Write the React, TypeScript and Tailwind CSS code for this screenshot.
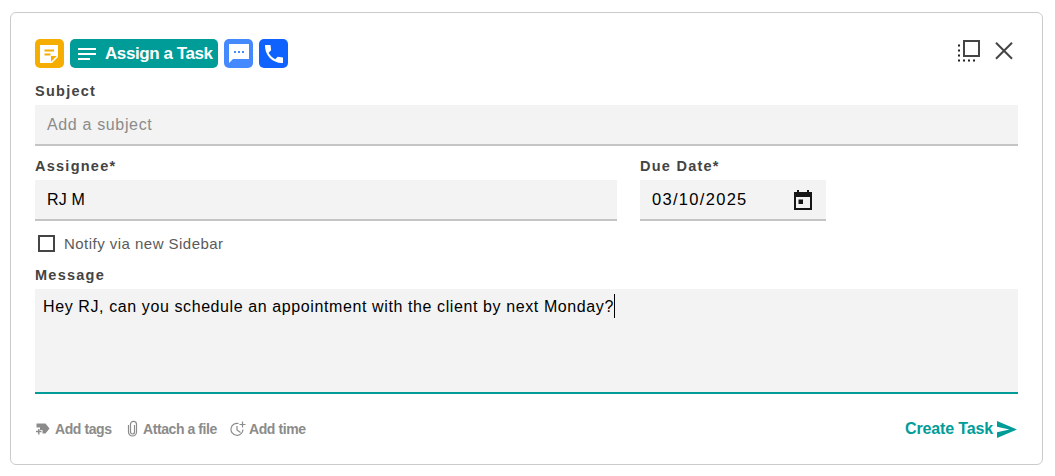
import { ReactNode } from "react";

type FieldProps = {
  label: string;
  className?: string;
  children: ReactNode;
};

const Field = ({ label, className, children }: FieldProps) => {
  return (
    <div className={className}>
      <div className="h-[26px] text-[14.5px] leading-[25px] font-bold tracking-[1.25px] text-[#444]">
        {label}
      </div>
      <div className="flex h-[41px] items-center border-b-2 border-[#c4c4c4] bg-[#f3f3f3] pl-3 text-[16px]">
        {children}
      </div>
    </div>
  );
};

const TaskForm = () => {
  return (
    <div className="mt-3 ml-[10px] h-[453px] w-[1033px] rounded-[6px] border border-[#cbcbcb] bg-white px-6 pt-[26px]">
      <div className="flex justify-between">
        <div className="flex gap-[6px]">
          <button className="flex h-[29px] w-[29px] items-center justify-center rounded-[5px] bg-[#f5ae00]">
            <svg className="mr-px h-[18px] w-[18px]" viewBox="0 0 18 18">
              <path fill="#fff" d="M0 0h18v12l-6 6H0z" />
              <path
                fill="none"
                stroke="#f5ae00"
                strokeWidth="1.8"
                d="M4.500 5.500h9.500M4.500 9.500h6"
              />
              <path fill="#f5ae00" d="M11 11h5.700L11 16.700z" />
            </svg>
          </button>
          <button className="flex h-[29px] w-[148px] items-center rounded-[5px] bg-[#009c98] pl-2 text-white">
            <svg className="h-[14px] w-[18px]" viewBox="0 0 18 14">
              <path
                stroke="#fff"
                strokeWidth="1.9"
                d="M0 2h18M0 7h18M0 12h12"
              />
            </svg>
            <span className="ml-[9px] text-[17px] leading-[29px] font-bold tracking-[-0.42px] whitespace-nowrap">
              Assign a Task
            </span>
          </button>
          <button className="flex h-[29px] w-[29px] items-center justify-center rounded-[5px] bg-[#4589ff]">
            <svg className="h-[19px] w-[20px]" viewBox="0 0 20 19">
              <path fill="#fff" d="M0 0h20v15H4l-4 4z" />
              <path fill="#4589ff" d="M5 7h2v2H5zM9 7h2v2H9zM13 7h2v2h-2z" />
            </svg>
          </button>
          <button className="flex h-[29px] w-[29px] items-center justify-center rounded-[5px] bg-[#0f62fe]">
            <svg className="h-[24px] w-[24px]" viewBox="0 0 24 24">
              <path
                fill="#fff"
                d="M21 15.460l-5.270-.61-2.520 2.520c-2.830-1.440-5.150-3.750-6.590-6.590l2.530-2.530L8.540 3H3.030C2.450 13.180 10.820 21.550 21 20.970v-5.510z"
              />
            </svg>
          </button>
        </div>
        <div className="flex pt-[1px]">
          <svg className="mr-[15px] h-[23px] w-[22px]" viewBox="0 0 22 23">
            <path
              fill="none"
              stroke="#444"
              strokeWidth="2"
              d="M6 1h15v15H6z"
            />
            <path
              fill="#222"
              d="M0 4.500h2v2H0zM0 9.500h2v2H0zM0 14.500h2v2H0zM0 19.500h2v2H0zM5 19.500h2v2H5zM10 19.500h2v2h-2zM15 19.500h2v2h-2z"
            />
          </svg>
          <svg className="mr-[5px] h-[23px] w-[18px]" viewBox="0 0 18 23">
            <path
              stroke="#444"
              strokeWidth="2"
              d="M1 2.700l16 16M17 2.700l-16 16"
            />
          </svg>
        </div>
      </div>

      <Field label="Subject" className="mt-[11px]">
        <span className="tracking-[0.65px] text-[#8b8b8b]">Add a subject</span>
      </Field>

      <div className="mt-2 flex gap-[23px]">
        <Field label="Assignee*" className="w-[582px]">
          <span className="tracking-[0.2px] text-black">RJ M</span>
        </Field>
        <Field label="Due Date*" className="w-[186px]">
          <span className="w-[142px] text-[16.5px] tracking-[1.3px] text-black">
            03/10/2025
          </span>
          <svg className="h-[20px] w-[18px]" viewBox="0 0 18 20">
            <path
              fill="#161616"
              d="M0 2h3V0h2v2h8V0h2v2h3v18H0zM2 7v11h14V7zM4.500 9.500h4.500v4.500H4.500z"
              fillRule="evenodd"
            />
          </svg>
        </Field>
      </div>

      <div className="mt-[13px] flex h-[18px] items-center pl-[3px]">
        <span className="h-[17px] w-[17px] border-2 border-[#444]" />
        <span className="ml-[9px] pt-[2px] text-[15px] leading-[20px] tracking-[0.47px] text-[#5a5a5a]">
          Notify via new Sidebar
        </span>
      </div>

      <div className="mt-[11px] h-[26px] text-[14.5px] leading-[25px] font-bold tracking-[1.25px] text-[#444]">
        Message
      </div>
      <div className="flex h-[105px] border-b-2 border-[#009c98] bg-[#f3f3f3] pt-[5px] pl-2 text-[16px] text-black">
        <span className="h-6 leading-[26px] tracking-[0.6px] whitespace-nowrap">
          Hey RJ, can you schedule an appointment with the client by next
          Monday?
        </span>
        <span className="h-6 w-px bg-black" />
      </div>

      <div className="mt-[23px] flex h-6 items-center text-[14px] font-bold text-[#8b8b8b]">
        <svg className="h-[12px] w-[15px]" viewBox="0 0 15 12">
          <path
            fill="#8b8b8b"
            d="M1.500 0.500h9L14.500 5.500l-4 5H7.500V7H5V4.500H1.500z"
          />
          <path
            stroke="#8b8b8b"
            strokeWidth="1.4"
            d="M1 8.500h5.500M3.800 6v5.500"
          />
        </svg>
        <span className="ml-[5px] w-[72px] tracking-[-0.42px]">Add tags</span>
        <svg className="mb-px h-[17px] w-[11px]" viewBox="0 0 11 17">
          <path
            fill="none"
            stroke="#8b8b8b"
            strokeWidth="1.2"
            d="M7.500 5v7a2 2 0 0 1-4 0V4.300a3 3 0 0 1 6 0V12a4 4 0 0 1-8 0V5"
          />
        </svg>
        <span className="ml-[5px] w-[87px] tracking-[-0.42px]">
          Attach a file
        </span>
        <svg className="mb-px h-[16px] w-[16px]" viewBox="0 0 16 16">
          <path
            fill="none"
            stroke="#8b8b8b"
            strokeWidth="1.2"
            d="M8.500 2.500A6 6 0 1 0 13 8.500M7 5v4l3.500 2.500M12.500 0.500v6M9.500 3.500h6"
          />
        </svg>
        <span className="ml-[3px] tracking-[-0.42px]">Add time</span>
        <button className="mr-[1px] ml-auto flex items-center text-[16px] tracking-[-0.15px] text-[#009c98]">
          Create Task
          <svg className="ml-1 h-[17px] w-[20px]" viewBox="0 0 20 17">
            <path
              fill="#009c98"
              d="M0 0L20 8.500L0 17V11.200L12.500 8.500L0 5.800z"
            />
          </svg>
        </button>
      </div>
    </div>
  );
};

export default function App() {
  return (
    <div className="flex h-[476px] w-[1055px] overflow-hidden bg-white font-['Liberation_Sans',Arial,sans-serif]">
      <TaskForm />
    </div>
  );
}
